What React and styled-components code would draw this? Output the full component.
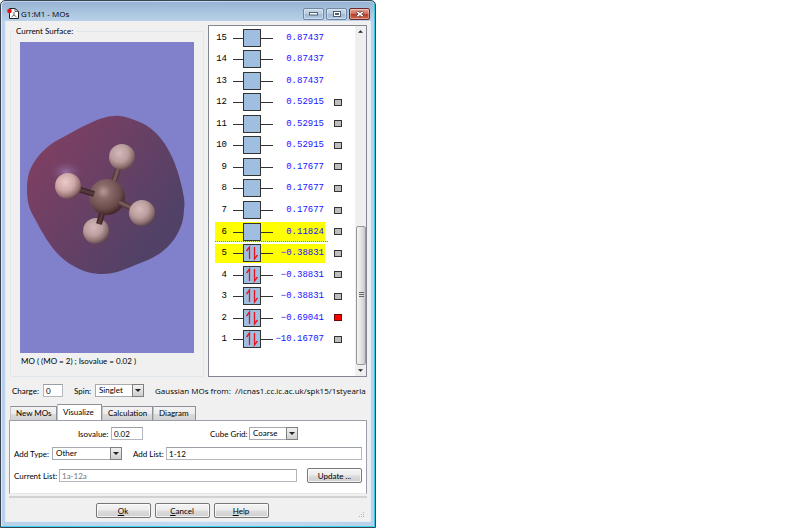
import React from "react";
import styled, { createGlobalStyle, css } from "styled-components";

const Global = createGlobalStyle`
  *, *::before, *::after { box-sizing: border-box; }
  body { margin: 0; background: #fff; }
  body, button, input, select {
    font-family: Lato, "Liberation Sans", sans-serif;
    font-size: 8px;
    line-height: 10px;
    color: #000;
  }
`;

const Frame = styled.main`
  width: 47%;
  min-width: 376px;
  padding: 1px 4px 5px;
  background: linear-gradient(90deg, #b9d1ea, #c3dbf2 50%, #b9d1ea);
  border: 1px solid #3b4552;
  border-radius: 5px 5px 0 0;
  box-shadow: inset 0 -1px #3fd3ee, inset -1px 0 #3fc4e0, inset 1px 0 #d9e9f7;
`;

const TitleBar = styled.header`
  display: flex;
  align-items: center;
  gap: 2px;
  height: 19px;
  margin: 0 -3px;
  padding: 4px 4px 0 5px;
  background: linear-gradient(#98b4d2, #b9d1ea);
  border-radius: 4px 4px 0 0;
`;

const Title = styled.h1`
  flex: 1;
  margin: 0;
  font: 8px/12px "Open Sans", sans-serif;
  color: #000;
`;

const Captions = styled.div`
  display: flex;
  gap: 2px;
`;

const CaptionButton = styled.button`
  display: grid;
  place-items: center;
  width: 21px;
  height: 12px;
  padding: 0;
  border: 1px solid ${(p) => (p.$danger ? "#6b2a2c" : "#71869f")};
  border-radius: 2px;
  background: ${(p) =>
    p.$danger
      ? "linear-gradient(#e5a596, #d0705c 45%, #b93a24 50%, #cf6a50)"
      : "linear-gradient(#c8daec, #b9cee4 45%, #9db7d3 50%, #b4cde6)"};
  box-shadow: inset 0 0 0 1px rgba(255, 255, 255, 0.35);
`;

const Body = styled.div`
  display: flex;
  flex-direction: column;
  padding: 4px 3px 3px;
  background: #f0f0f0;
  border: 1px solid #e3edf6;
  border-top: 0;
`;

const Upper = styled.div`
  display: flex;
  gap: 4px;
  height: 352px;
`;

const Group = styled.fieldset`
  flex: 1;
  min-width: 0;
  margin: 0 0 0 1px;
  padding: 5px 9px 0;
  border: 1px solid #dfe6ec;
  border-radius: 2px;
`;

const Legend = styled.legend`
  margin-left: -7px;
  padding: 0 3px;
  line-height: 12px;
`;

const Surface = styled.svg`
  display: block;
  width: 100%;
  height: 311px;
  background: #8080cb;
`;

const Caption = styled.p`
  margin: 3px 1px 0;
`;

const ListPanel = styled.section`
  display: flex;
  width: 159px;
  background: #fff;
  border: 1px solid #828790;
`;

const Orbitals = styled.ol`
  flex: 1;
  display: flex;
  flex-direction: column;
  height: 323px;
  margin: 1px 0 0;
  padding: 0 0 0 6px;
  list-style: none;
`;

const OrbitalRow = styled.li`
  flex: 1;
  display: flex;
  align-items: center;
  gap: 9px;
  ${(p) =>
    p.$lumo &&
    css`
      background: repeating-linear-gradient(90deg, #16d816 0 1px, #d8ff60 1px 2px) 0 100% / 113px 1px no-repeat;
    `}
`;

const OrbitalLabel = styled.label`
  display: grid;
  grid-template-columns: 12px 40px 1fr;
  column-gap: 6px;
  align-items: center;
  width: 110px;
  height: 19px;
  background: ${(p) => (p.$marked ? "#ffff00" : "transparent")};
  font: 9px/12px "Liberation Mono", monospace;
  text-align: right;
  white-space: nowrap;
`;

const Energy = styled.span`
  display: flex;
  justify-content: flex-end;
  min-width: 0;
  padding-right: 1px;
  color: #1414ff;
`;

const Mark = styled.input`
  appearance: none;
  width: 8px;
  height: 7px;
  margin: 0;
  border: 1px solid #333;
  background: #bdbdbd;
  &:checked { background: #f00; border-color: #700; }
`;

const ScrollBar = styled.div`
  display: flex;
  flex-direction: column;
  width: 11px;
  background: #efefef;
`;

const ScrollArrow = styled.button`
  display: grid;
  place-items: center;
  width: 100%;
  height: 11px;
  padding: 0;
  border: 0;
  background: none;
`;

const ScrollTrack = styled.div`
  flex: 1;
  display: flex;
  flex-direction: column;
  justify-content: flex-end;
`;

const ScrollThumb = styled.div`
  display: grid;
  place-items: center;
  height: 42.5%;
  margin: 0 0 0 1px;
  border: 1px solid #979797;
  border-radius: 2px;
  background: linear-gradient(90deg, #f5f5f5, #e4e4e6 50%, #c8c8cc);
`;

const Line = styled.div`
  display: flex;
  align-items: center;
  min-width: 0;
  height: 13px;
  white-space: nowrap;
`;

const ChargeLine = styled(Line)`
  margin: 7px 0 0 3px;
`;

const Label = styled.label`
  width: ${(p) => p.$width}px;
  margin-left: ${(p) => p.$before || 0}px;
`;

const Source = styled.div`
  flex: 1;
  min-width: 0;
  margin-left: 11px;
  font: 8px/12px "Open Sans", sans-serif;
  white-space: pre;
`;

const Field = styled.input`
  ${(p) => (p.$width ? `width: ${p.$width}px;` : "flex: 1; min-width: 0;")}
  height: 13px;
  padding: 0 2px;
  border: 1px solid #b4b8be;
  border-top-color: #9a9ea5;
  background: #fff;
  &:disabled { color: #777; }
`;

const Picker = styled.span`
  display: grid;
  grid-template-columns: 1fr 12px;
  width: ${(p) => p.$width}px;
  height: 13px;
`;

const Select = styled.select`
  grid-area: 1 / 1 / 2 / 3;
  appearance: none;
  width: 100%;
  height: 13px;
  padding: 0 12px 1px 3px;
  border: 1px solid #a7abb1;
  border-radius: 0;
  background: #fff;
`;

const Drop = styled.span`
  grid-area: 1 / 2;
  display: grid;
  place-items: center;
  border: 1px solid #808080;
  background: linear-gradient(#f2f2f2, #cfcfcf);
  pointer-events: none;
`;

const Tabs = styled.div`
  display: flex;
  align-items: flex-end;
  height: 17px;
  margin: 7px 0 -1px 1px;
`;

const Tab = styled.button`
  width: ${(p) => p.$width}px;
  height: ${(p) => (p.$active ? 17 : 15)}px;
  padding: 0 0 1px 5px;
  border: 1px solid #8c9097;
  border-left-color: #c0c3c8;
  border-bottom-color: ${(p) => (p.$active ? "#fff" : "#8c9097")};
  background: ${(p) => (p.$active ? "#fff" : "linear-gradient(#f3f3f3, #ebebeb 50%, #dcdcdc 52%, #d2d2d2)")};
  text-align: left;
  white-space: nowrap;
`;

const TabPanel = styled.div`
  display: flex;
  flex-direction: column;
  padding: 6px 4px 10px;
  background: #fff;
  border: 1px solid #9ba0a8;
  border-bottom-color: #e8e8e8;
`;

const CenterLine = styled(Line)`
  padding-left: 64px;
`;

const WideLine = styled(Line)`
  height: 15px;
  margin-top: ${(p) => p.$top}px;
`;

const PushButton = styled.button`
  width: 55px;
  height: 15px;
  padding: 0;
  border: 1px solid #777;
  border-radius: 2px;
  background: linear-gradient(#f4f4f4, #ececec 48%, #dcdcdc 52%, #cfcfcf);
  box-shadow: inset 0 0 0 1px rgba(255, 255, 255, 0.75);
  margin-left: ${(p) => p.$before || 0}px;
`;

const Rule = styled.hr`
  width: 100%;
  height: 2px;
  margin: 2px 0 5px;
  border: 0;
  background: #d2d2d2;
`;

const Footer = styled.footer`
  display: grid;
  grid-template-columns: 1fr auto 1fr;
`;

const FooterButtons = styled.div`
  display: flex;
  gap: 4px;
  margin-right: 12px;
`;

const Grip = styled.svg`
  align-self: end;
  justify-self: end;
  margin-right: 2px;
`;

const outline = [
  [83, 76], [100, 74], [117, 79], [130, 86], [142, 98], [152, 115], [159, 134],
  [164, 156], [164, 168], [162, 181], [155, 196], [143, 209], [130, 217], [113, 224],
  [97, 230], [83, 232], [67, 230], [50, 222], [37, 211], [27, 198], [15, 177],
  [9, 164], [7, 148], [9, 131], [17, 116], [30, 103], [47, 93], [66, 83],
];

function closedCurve(points) {
  const n = points.length;
  const at = (i) => points[(i + n) % n];
  let d = `M${points[0]}`;
  for (let i = 0; i < n; i += 1) {
    const [a, b, c, e] = [at(i - 1), at(i), at(i + 1), at(i + 2)];
    d += `C${b[0] + (c[0] - a[0]) / 6},${b[1] + (c[1] - a[1]) / 6} ${c[0] - (e[0] - b[0]) / 6},${c[1] - (e[1] - b[1]) / 6} ${c}`;
  }
  return `${d}Z`;
}

function Bond({ from, to, light }) {
  const line = { x1: from[0], y1: from[1], x2: to[0], y2: to[1] };
  return (
    <g>
      <line {...line} stroke={light ? "#54393c" : "#3d2529"} strokeWidth="6" />
      <line {...line} stroke={light ? "#775a5b" : "#543a3c"} strokeWidth="3" />
    </g>
  );
}

function Molecule() {
  return (
    <Surface viewBox="0 0 174 311" preserveAspectRatio="xMidYMid slice" role="img" aria-label="Molecular orbital surface">
      <defs>
        <linearGradient id="cloud" x1="0.05" y1="0.15" x2="0.85" y2="0.75">
          <stop offset="0" stopColor="#803f62" />
          <stop offset="0.5" stopColor="#694065" />
          <stop offset="1" stopColor="#514166" />
        </linearGradient>
        <radialGradient id="glint">
          <stop offset="0" stopColor="#9a76aa" stopOpacity="0.85" />
          <stop offset="1" stopColor="#7c4470" stopOpacity="0" />
        </radialGradient>
        <radialGradient id="carbon" cx="0.4" cy="0.35" r="0.65">
          <stop offset="0" stopColor="#b89896" />
          <stop offset="0.3" stopColor="#8a6a69" />
          <stop offset="0.75" stopColor="#6a4b4b" />
          <stop offset="1" stopColor="#45282a" />
        </radialGradient>
        <radialGradient id="hydrogen" cx="0.4" cy="0.35" r="0.68">
          <stop offset="0" stopColor="#d4b9b8" />
          <stop offset="0.5" stopColor="#ba9e9d" />
          <stop offset="0.8" stopColor="#8c7071" />
          <stop offset="1" stopColor="#5a4246" />
        </radialGradient>
        <radialGradient id="hydrogenLit" cx="0.4" cy="0.35" r="0.68">
          <stop offset="0" stopColor="#eccaca" />
          <stop offset="0.5" stopColor="#d0a9a9" />
          <stop offset="0.8" stopColor="#9c7778" />
          <stop offset="1" stopColor="#5e4046" />
        </radialGradient>
      </defs>
      <path d={closedCurve(outline)} fill="url(#cloud)" />
      <ellipse cx="46" cy="130" rx="17" ry="12" fill="url(#glint)" />
      <Bond from={[102, 115]} to={[93, 142]} light />
      <circle cx="102" cy="115" r="13" fill="url(#hydrogen)" />
      <circle cx="76" cy="189" r="13" fill="url(#hydrogen)" />
      <Bond from={[84, 165]} to={[79, 182]} />
      <circle cx="87" cy="155" r="18" fill="url(#carbon)" />
      <Bond from={[48, 144]} to={[74, 152]} />
      <Bond from={[99, 160]} to={[122, 171]} light />
      <circle cx="48" cy="144" r="13" fill="url(#hydrogenLit)" />
      <circle cx="122" cy="171" r="13" fill="url(#hydrogen)" />
    </Surface>
  );
}

function Level({ filled }) {
  return (
    <svg width="40" height="18" viewBox="0 0 40 18" aria-hidden="true">
      <path d="M0 9.5H40" stroke="#333" />
      <rect x="10.5" y="0.5" width="17" height="17" fill="#a0bfe0" stroke="#333" />
      {filled && (
        <g fill="none" stroke="#e8131f" strokeWidth="1.3">
          <path d="M16.5 15V3L13.5 7" />
          <path d="M21.5 3V15L24.5 11" />
        </g>
      )}
    </svg>
  );
}

function Triangle({ up, size = 5 }) {
  return (
    <svg width={size} height="3" viewBox="0 0 6 3" aria-hidden="true">
      <path d={up ? "M0 3L3 0L6 3Z" : "M0 0H6L3 3Z"} fill="#222" />
    </svg>
  );
}

function DropDown({ id, width, value }) {
  return (
    <Picker $width={width}>
      <Select id={id} defaultValue={value}>
        <option>{value}</option>
      </Select>
      <Drop><Triangle size={6} /></Drop>
    </Picker>
  );
}

const energies = [
  [15, "0.87437"], [14, "0.87437"], [13, "0.87437"], [12, "0.52915"], [11, "0.52915"],
  [10, "0.52915"], [9, "0.17677"], [8, "0.17677"], [7, "0.17677"], [6, "0.11824"],
  [5, "−0.38831"], [4, "−0.38831"], [3, "−0.38831"], [2, "−0.69041"], [1, "−10.16707"],
];

export default function App() {
  return (
    <>
      <Global />
      <Frame>
        <TitleBar>
          <svg width="12" height="13" viewBox="0 0 12 13" aria-hidden="true">
            <path d="M2.5 1.5H8L11.5 4.5V11.5H2.5Z" fill="#fff" stroke="#222" />
            <path d="M8 1.5V4.5H11.5M7 5V8M7 8L4.5 10M7 8L9.5 10" fill="none" stroke="#444" strokeWidth="0.8" />
            <circle cx="2.5" cy="4" r="2.3" fill="#e01212" />
          </svg>
          <Title>G1:M1 - MOs</Title>
          <Captions>
            <CaptionButton aria-label="Minimize">
              <svg width="9" height="4" viewBox="0 0 9 4"><rect x="0.5" y="0.5" width="8" height="2.5" fill="#fff" stroke="#53606f" /></svg>
            </CaptionButton>
            <CaptionButton aria-label="Maximize">
              <svg width="8" height="6" viewBox="0 0 8 6"><rect x="0.5" y="0.5" width="7" height="5" fill="#fff" stroke="#53606f" /><rect x="2.5" y="2.5" width="3" height="1" fill="none" stroke="#53606f" /></svg>
            </CaptionButton>
            <CaptionButton aria-label="Close" $danger>
              <svg width="8" height="6" viewBox="0 0 8 6"><path d="M1 0.5L7 5.5M7 0.5L1 5.5" stroke="#5b3438" strokeWidth="3" /><path d="M1.3 0.8L6.7 5.2M6.7 0.8L1.3 5.2" stroke="#fff" strokeWidth="1.7" /></svg>
            </CaptionButton>
          </Captions>
        </TitleBar>
        <Body>
          <Upper>
            <Group>
              <Legend>Current Surface:</Legend>
              <Molecule />
              <Caption>MO ( (MO = 2) ; Isovalue = 0.02 )</Caption>
            </Group>
            <ListPanel aria-label="Orbitals">
              <Orbitals>
                {energies.map(([n, energy]) => (
                  <OrbitalRow key={n} $lumo={n === 6}>
                    <OrbitalLabel htmlFor={n < 13 ? `mo-${n}` : undefined} $marked={n === 5 || n === 6}>
                      <span>{n}</span>
                      <Level filled={n < 6} />
                      <Energy>{energy}</Energy>
                    </OrbitalLabel>
                    {n < 13 && <Mark type="checkbox" id={`mo-${n}`} defaultChecked={n === 2} />}
                  </OrbitalRow>
                ))}
              </Orbitals>
              <ScrollBar>
                <ScrollArrow aria-label="Scroll up"><Triangle up /></ScrollArrow>
                <ScrollTrack>
                  <ScrollThumb>
                    <svg width="5" height="6" viewBox="0 0 5 6"><path d="M0 0.5H5M0 2.5H5M0 4.5H5" stroke="#666" /></svg>
                  </ScrollThumb>
                </ScrollTrack>
                <ScrollArrow aria-label="Scroll down"><Triangle /></ScrollArrow>
              </ScrollBar>
            </ListPanel>
          </Upper>

          <ChargeLine>
            <Label htmlFor="charge" $width={31}>Charge:</Label>
            <Field id="charge" $width={20} defaultValue="0" />
            <Label htmlFor="spin" $width={21} $before={11}>Spin:</Label>
            <DropDown id="spin" width={49} value="Singlet" />
            <Source>Gaussian MOs from:  //icnas1.cc.ic.ac.uk/spk15/1styearla</Source>
          </ChargeLine>

          <Tabs role="tablist">
            <Tab role="tab" $width={47}>New MOs</Tab>
            <Tab role="tab" $width={45} $active aria-selected="true">Visualize</Tab>
            <Tab role="tab" $width={51}>Calculation</Tab>
            <Tab role="tab" $width={43}>Diagram</Tab>
          </Tabs>
          <TabPanel role="tabpanel">
            <CenterLine>
              <Label htmlFor="iso" $width={33}>Isovalue:</Label>
              <Field id="iso" $width={32} defaultValue="0.02" />
              <Label htmlFor="grid" $width={39} $before={67}>Cube Grid:</Label>
              <DropDown id="grid" width={49} value="Coarse" />
            </CenterLine>
            <WideLine $top={6}>
              <Label htmlFor="type" $width={38}>Add Type:</Label>
              <DropDown id="type" width={70} value="Other" />
              <Label htmlFor="list" $width={33} $before={11}>Add List:</Label>
              <Field id="list" defaultValue="1-12" />
            </WideLine>
            <WideLine $top={7}>
              <Label htmlFor="current" $width={45}>Current List:</Label>
              <Field id="current" defaultValue="1a-12a" disabled />
              <PushButton $before={10}>Update ...</PushButton>
            </WideLine>
          </TabPanel>
          <Rule />
          <Footer>
            <span />
            <FooterButtons>
              <PushButton><u>O</u>k</PushButton>
              <PushButton><u>C</u>ancel</PushButton>
              <PushButton><u>H</u>elp</PushButton>
            </FooterButtons>
            <Grip width="6" height="6" viewBox="0 0 6 6" aria-hidden="true">
              <path d="M4 0H5V1H4ZM2 2H3V3H2ZM4 2H5V3H4ZM0 4H1V5H0ZM2 4H3V5H2ZM4 4H5V5H4Z" fill="#b5b5b5" />
            </Grip>
          </Footer>
        </Body>
      </Frame>
    </>
  );
}
